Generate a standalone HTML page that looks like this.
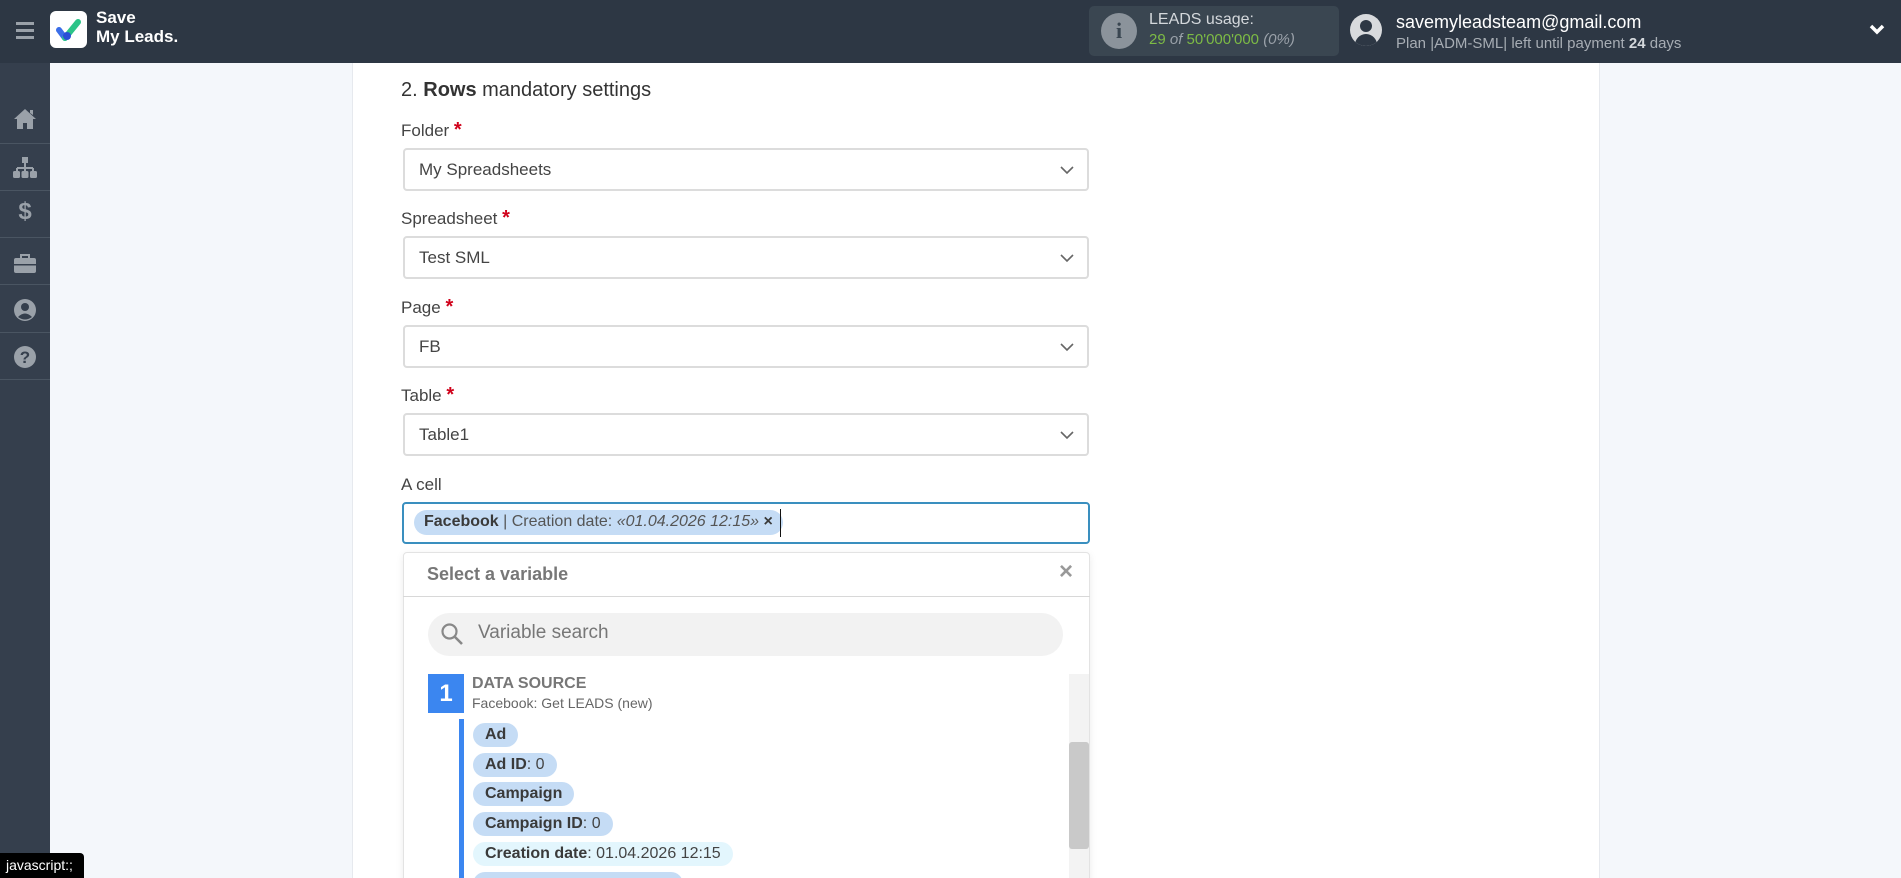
<!DOCTYPE html>
<html><head><meta charset="utf-8">
<style>
*{box-sizing:border-box;margin:0;padding:0}
html,body{width:1901px;height:878px;overflow:hidden}
body{background:#f4f7fb;font-family:"Liberation Sans",sans-serif;position:relative;color:#333}
#wrap{position:absolute;left:0;top:0;width:1901px;height:878px;overflow:hidden}
.hdr{position:absolute;left:0;top:0;width:1901px;height:63px;background:#2d3744}
.side{position:absolute;left:0;top:63px;width:50px;height:815px;background:#353f4d}
.side .sep{position:absolute;left:0;width:50px;height:1px;background:#4a5562}
.side svg{position:absolute;left:13px}
.panel{position:absolute;left:352px;top:63px;width:1248px;height:815px;background:#fff;border-left:1px solid #e6e9ee;border-right:1px solid #e6e9ee}
.abs{position:absolute}
.lbl{position:absolute;left:401px;font-size:17px;color:#444}
.lbl b{color:#d0021b;font-size:20px}
.sel{position:absolute;left:403px;width:686px;height:43px;border:2px solid #dcdcdc;border-radius:4px;font-size:17px;color:#444;padding:10px 0 0 14px}
.sel svg{position:absolute;right:12px;top:15px}
.pill{position:absolute;left:473px;height:24px;border-radius:12px;background:#c5dcf5;font-size:16px;padding:3px 12px 0 12px;color:#444}
.pill b{color:#3a3a3a}
</style></head><body><div id="wrap">
<div class="hdr">
  <div class="abs" style="left:16px;top:22px;width:18px;height:3px;background:#9aa1a9;box-shadow:0 7px 0 #9aa1a9,0 14px 0 #9aa1a9"></div>
  <div class="abs" style="left:50px;top:11px;width:37px;height:37px;background:#fff;border-radius:6px">
    <svg width="37" height="37" viewBox="0 0 37 37"><path d="M9 19 L15 27" stroke="#3b6ee8" stroke-width="6" stroke-linecap="round"/><path d="M15 27 L28 11" stroke="#2cc488" stroke-width="6" stroke-linecap="round"/><circle cx="17" cy="25" r="4" fill="#2a4fd6"/></svg>
  </div>
  <div class="abs" style="left:96px;top:8px;color:#fff;font-weight:bold;font-size:17px;line-height:19px">Save<br>My Leads.</div>
  <div class="abs" style="left:1089px;top:6px;width:250px;height:50px;background:#3a4651;border-radius:5px">
    <div class="abs" style="left:12px;top:7px;width:36px;height:36px;border-radius:50%;background:#8b939b;color:#3a4651;font-weight:bold;font-size:22px;text-align:center;line-height:36px;font-family:'Liberation Serif',serif">i</div>
    <div class="abs" style="left:60px;top:5px;color:#d4d8dc;font-size:16px">LEADS usage:</div>
    <div class="abs" style="left:60px;top:25px;color:#7dbb45;font-size:15px">29 <i style="color:#9aa1a9">of</i> 50'000'000 <i style="color:#9aa1a9">(0%)</i></div>
  </div>
  <div class="abs" style="left:1350px;top:14px;width:32px;height:32px;border-radius:50%;background:#d8dadd;overflow:hidden">
    <div class="abs" style="left:10px;top:6px;width:12px;height:12px;border-radius:50%;background:#2d3744"></div>
    <div class="abs" style="left:5px;top:20px;width:22px;height:16px;border-radius:11px 11px 0 0;background:#2d3744"></div>
  </div>
  <div class="abs" style="left:1396px;top:12px;color:#fff;font-size:18px">savemyleadsteam@gmail.com</div>
  <div class="abs" style="left:1396px;top:35px;color:#a7adb4;font-size:15px">Plan |ADM-SML| left until payment <b style="color:#d4d8dc">24</b> days</div>
  <svg class="abs" style="left:1869px;top:24px" width="16" height="12" viewBox="0 0 16 12"><path d="M2 2 L8 8 L14 2" stroke="#fff" stroke-width="3.5" fill="none"/></svg>
</div>
<div class="side">
  <svg style="top:45px" width="24" height="22" viewBox="0 0 24 22"><path d="M12 1 L1 11 L4 11 L4 21 L10 21 L10 15 L14 15 L14 21 L20 21 L20 11 L23 11 Z M17 2 L20 2 L20 7 L17 5Z" fill="#9aa1a9"/></svg>
  <div class="sep" style="top:80px"></div>
  <svg style="top:94px" width="24" height="22" viewBox="0 0 24 22"><rect x="9" y="0" width="6" height="6" fill="#9aa1a9"/><path d="M12 6v5M4 11h16M4 11v4M12 11v4M20 11v4" stroke="#9aa1a9" stroke-width="2" fill="none"/><rect x="0" y="14" width="7" height="7" rx="1.5" fill="#9aa1a9"/><rect x="8.5" y="14" width="7" height="7" rx="1.5" fill="#9aa1a9"/><rect x="17" y="14" width="7" height="7" rx="1.5" fill="#9aa1a9"/></svg>
  <div class="sep" style="top:127px"></div>
  <div class="abs" style="left:0;top:135px;width:50px;text-align:center;color:#9aa1a9;font-weight:bold;font-size:24px">$</div>
  <div class="sep" style="top:174px"></div>
  <svg style="top:191px" width="24" height="20" viewBox="0 0 24 20"><path d="M8 4V1h8v3" stroke="#9aa1a9" stroke-width="2" fill="none"/><rect x="1" y="4" width="22" height="15" rx="2" fill="#9aa1a9"/><rect x="1" y="10" width="22" height="1.5" fill="#353f4d"/></svg>
  <div class="sep" style="top:221px"></div>
  <svg style="top:235px" width="24" height="24" viewBox="0 0 24 24"><circle cx="12" cy="12" r="11" fill="#9aa1a9"/><circle cx="12" cy="9" r="4" fill="#353f4d"/><path d="M5 19 Q12 12 19 19 Q12 24 5 19Z" fill="#353f4d"/></svg>
  <div class="sep" style="top:269px"></div>
  <svg style="top:282px" width="24" height="24" viewBox="0 0 24 24"><circle cx="12" cy="12" r="11" fill="#9aa1a9"/><text x="12" y="18" text-anchor="middle" font-size="17" font-weight="bold" fill="#353f4d" font-family="Liberation Sans">?</text></svg>
  <div class="sep" style="top:316px"></div>
</div>
<div class="panel"></div>
<div class="abs" style="left:401px;top:79px;font-size:20px;color:#333">2. <b>Rows</b> mandatory settings</div>
<div class="lbl" style="top:119px">Folder <b>*</b></div>
<div class="sel" style="top:148px">My Spreadsheets<svg width="16" height="10" viewBox="0 0 16 10"><path d="M2 2 L8 8 L14 2" stroke="#666" stroke-width="1.6" fill="none"/></svg></div>
<div class="lbl" style="top:207px">Spreadsheet <b>*</b></div>
<div class="sel" style="top:236px">Test SML<svg width="16" height="10" viewBox="0 0 16 10"><path d="M2 2 L8 8 L14 2" stroke="#666" stroke-width="1.6" fill="none"/></svg></div>
<div class="lbl" style="top:296px">Page <b>*</b></div>
<div class="sel" style="top:325px">FB<svg width="16" height="10" viewBox="0 0 16 10"><path d="M2 2 L8 8 L14 2" stroke="#666" stroke-width="1.6" fill="none"/></svg></div>
<div class="lbl" style="top:384px">Table <b>*</b></div>
<div class="sel" style="top:413px">Table1<svg width="16" height="10" viewBox="0 0 16 10"><path d="M2 2 L8 8 L14 2" stroke="#666" stroke-width="1.6" fill="none"/></svg></div>
<div class="lbl" style="top:475px">A cell</div>
<div class="abs" style="left:402px;top:502px;width:688px;height:42px;border:2px solid #3a8fbf;border-radius:4px"></div>
<div class="abs" style="left:414px;top:510px;height:25px;border-radius:13px;background:#c5dcf5;font-size:16px;padding:3px 10px 0 10px;color:#555"><b style="color:#3a3a3a">Facebook</b> | Creation date: <i>«01.04.2026 12:15»</i> <b style="color:#3a3a3a">×</b></div>
<div class="abs" style="left:780px;top:509px;width:1px;height:28px;background:#111"></div>
<div class="abs" style="left:403px;top:552px;width:687px;height:340px;background:#fff;border:1px solid #e3e3e3;border-radius:4px;box-shadow:0 2px 8px rgba(0,0,0,.08)"></div>
<div class="abs" style="left:427px;top:564px;font-size:18px;font-weight:bold;color:#777">Select a variable</div>
<div class="abs" style="left:1059px;top:558px;font-size:24px;font-weight:bold;color:#999">×</div>
<div class="abs" style="left:403px;top:596px;width:687px;height:1px;background:#d8d8d8"></div>
<div class="abs" style="left:428px;top:613px;width:635px;height:43px;border-radius:22px;background:#f2f2f2"></div>
<svg class="abs" style="left:440px;top:622px" width="24" height="24" viewBox="0 0 24 24"><circle cx="9.5" cy="9.5" r="7" stroke="#888" stroke-width="2.2" fill="none"/><path d="M15 15 L22 22" stroke="#888" stroke-width="2.6"/></svg>
<div class="abs" style="left:478px;top:622px;font-size:19px;color:#777">Variable search</div>
<div class="abs" style="left:1069px;top:674px;width:20px;height:204px;background:#f3f3f3"></div>
<div class="abs" style="left:1069px;top:742px;width:20px;height:107px;background:#c9c9c9;border-radius:3px"></div>
<div class="abs" style="left:428px;top:674px;width:36px;height:39px;background:#3b86f0;color:#fff;font-weight:bold;font-size:24px;text-align:center;line-height:39px">1</div>
<div class="abs" style="left:472px;top:675px;font-size:16px;font-weight:bold;color:#777">DATA SOURCE</div>
<div class="abs" style="left:472px;top:695px;font-size:14px;color:#666">Facebook: Get LEADS (new)</div>
<div class="abs" style="left:459px;top:719px;width:5px;height:159px;background:#3b86f0"></div>
<div class="pill" style="top:723px"><b>Ad</b></div>
<div class="pill" style="top:753px"><b>Ad ID</b>: 0</div>
<div class="pill" style="top:782px"><b>Campaign</b></div>
<div class="pill" style="top:812px"><b>Campaign ID</b>: 0</div>
<div class="pill" style="top:842px;background:#e3f6fd"><b>Creation date</b>: 01.04.2026 12:15</div>
<div class="pill" style="top:872px;width:210px"></div>
<div class="abs" style="left:0;top:853px;width:84px;height:25px;background:#000;color:#fff;font-size:14px;padding:4px 0 0 6px;border-radius:0 4px 0 0">javascript:;</div>
</div></body></html>
